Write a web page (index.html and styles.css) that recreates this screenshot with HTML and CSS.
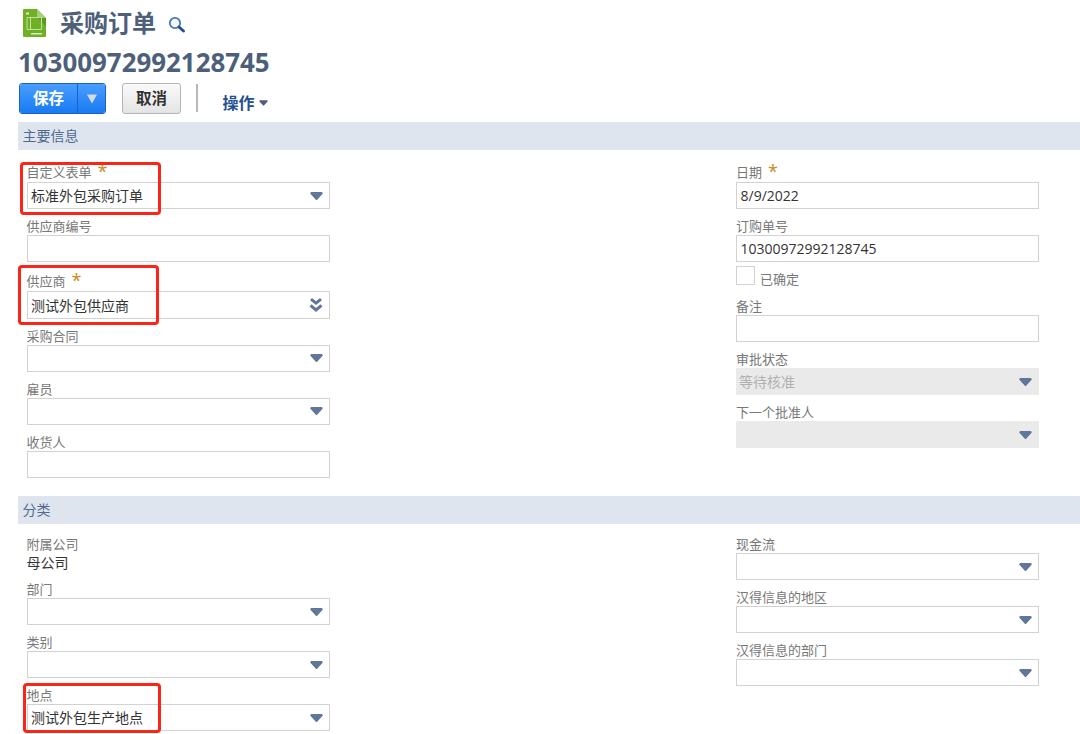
FILE: index.html
```html
<!DOCTYPE html>
<html lang="zh-CN">
<head>
    <meta charset="UTF-8">
    <meta name="viewport" content="width=device-width, initial-scale=1.0">
    <title>采购订单</title>
    <link rel="stylesheet" href="styles.css">
</head>
<body>
    <!-- shared icons -->
    <svg class="defs" width="0" height="0">
        <symbol id="arrow" viewBox="0 0 13 8"><path d="M1.5 0h10a1.2 1.2 0 0 1 .9 2L7.4 7.4a1.2 1.2 0 0 1-1.8 0L.6 2a1.2 1.2 0 0 1 .9-2z"/></symbol>
        <symbol id="double-arrow" viewBox="0 0 14 14"><path d="M2 1.2l5 4 5-4M1.500 7.400l5.500 4.600 5.500-4.600" fill="none" stroke="#607799" stroke-width="3"/></symbol>
    </svg>

    <div class="page-header">
        <div class="title-row">
            <svg class="record-icon" viewBox="0 0 23 28">
                <path d="M1 0h13l9 9v18a1 1 0 0 1-1 1H1a1 1 0 0 1-1-1V1a1 1 0 0 1 1-1z" fill="#6fb122"/>
                <path d="M15 9h8v8z" fill="#5a9a1b"/>
                <path d="M14 0l9 9h-8a1 1 0 0 1-1-1z" fill="#a5cf78"/>
                <path d="M4 8.500h14.500v12H4zM7.500 8v13" fill="none" stroke="#c4dfa4" stroke-width="1"/>
                <path d="M3 3.500h3v2H3zM8 24h11v1.500H8z" fill="#d8ebc2"/>
            </svg>
            <h1>采购订单</h1>
            <svg class="search-icon" viewBox="0 0 18 18">
                <circle cx="7" cy="7" r="5.200" fill="#f2f8ff" stroke="#4a78b8" stroke-width="1.800"/>
                <path d="M11 11l4.500 4" stroke="#24508f" stroke-width="3" stroke-linecap="round"/>
            </svg>
        </div>
        <div class="record-number">10300972992128745</div>
        <div class="actions">
            <div class="save-group">
                <button class="save">保存</button>
                <button class="save-more"><svg width="10" height="10" viewBox="0 0 11 10"><path d="M0 0h11L5.500 10z" fill="#d5dbe3"/></svg></button>
            </div>
            <button class="cancel">取消</button>
            <span class="divider"></span>
            <a class="menu">操作<svg class="menu-arrow"><use href="#arrow"/></svg></a>
        </div>
    </div>

    <h2 class="section-title">主要信息</h2>
    <div class="section main-info">
        <div class="column">
            <div class="field marked form-field">
                <label class="required">自定义表单<span class="star">*</span></label>
                <div class="box">标准外包采购订单<svg class="arrow"><use href="#arrow"/></svg></div>
            </div>
            <div class="field">
                <label>供应商编号</label>
                <div class="box"></div>
            </div>
            <div class="field marked vendor-field">
                <label class="required">供应商<span class="star">*</span></label>
                <div class="box">测试外包供应商<svg class="double-arrow"><use href="#double-arrow"/></svg></div>
            </div>
            <div class="field">
                <label>采购合同</label>
                <div class="box"><svg class="arrow"><use href="#arrow"/></svg></div>
            </div>
            <div class="field">
                <label>雇员</label>
                <div class="box"><svg class="arrow"><use href="#arrow"/></svg></div>
            </div>
            <div class="field">
                <label>收货人</label>
                <div class="box"></div>
            </div>
        </div>
        <div class="column">
            <div class="field">
                <label class="required">日期<span class="star">*</span></label>
                <div class="box">8/9/2022</div>
            </div>
            <div class="field">
                <label>订购单号</label>
                <div class="box">10300972992128745</div>
            </div>
            <div class="check-field">
                <span class="checkbox"></span>
                <span class="check-label">已确定</span>
            </div>
            <div class="field">
                <label>备注</label>
                <div class="box"></div>
            </div>
            <div class="field">
                <label>审批状态</label>
                <div class="box disabled">等待核准<svg class="arrow"><use href="#arrow"/></svg></div>
            </div>
            <div class="field">
                <label>下一个批准人</label>
                <div class="box disabled"><svg class="arrow"><use href="#arrow"/></svg></div>
            </div>
        </div>
    </div>

    <h2 class="section-title">分类</h2>
    <div class="section classification">
        <div class="column">
            <div class="field static-field">
                <label>附属公司</label>
                <div class="static">母公司</div>
            </div>
            <div class="field">
                <label>部门</label>
                <div class="box"><svg class="arrow"><use href="#arrow"/></svg></div>
            </div>
            <div class="field">
                <label>类别</label>
                <div class="box"><svg class="arrow"><use href="#arrow"/></svg></div>
            </div>
            <div class="field marked location-field">
                <label>地点</label>
                <div class="box">测试外包生产地点<svg class="arrow"><use href="#arrow"/></svg></div>
            </div>
        </div>
        <div class="column">
            <div class="field">
                <label>现金流</label>
                <div class="box"><svg class="arrow"><use href="#arrow"/></svg></div>
            </div>
            <div class="field">
                <label>汉得信息的地区</label>
                <div class="box"><svg class="arrow"><use href="#arrow"/></svg></div>
            </div>
            <div class="field">
                <label>汉得信息的部门</label>
                <div class="box"><svg class="arrow"><use href="#arrow"/></svg></div>
            </div>
        </div>
    </div>
</body>
</html>
```
FILE: styles.css
```css
*,
*::after {
    box-sizing: border-box;
}
body {
    margin: 0;
    height: 734px;
    overflow: hidden;
    background-color: #fff;
    color: #333;
    font-family: 'Open Sans', 'Noto Sans CJK SC', sans-serif;
    font-size: 14px;
}
.defs {
    display: block;
}
.page-header {
    height: 122px;
    padding: 8px 0 0 19px;
}
.title-row {
    display: flex;
    align-items: center;
    height: 30px;
    padding-left: 4px;
}
.record-icon {
    width: 23px;
    height: 28px;
}
h1 {
    margin: 0 0 0 14px;
    font-size: 24px;
    line-height: 30px;
    color: #4d5f79;
}
.search-icon {
    width: 18px;
    height: 18px;
    margin: 3px 0 0 12px;
}
.record-number {
    height: 45px;
    margin-left: -1px;
    font-size: 25.9px;
    font-weight: bold;
    line-height: 49px;
    color: #4d5f79;
}
.actions {
    display: flex;
    height: 30px;
}
button {
    padding: 0;
    font-family: inherit;
    font-weight: bold;
    line-height: 27px;
}
.save-group {
    display: flex;
    width: 87px;
    height: 31px;
    border: 1px solid #1c62c4;
    border-radius: 3px;
    overflow: hidden;
}
.save,
.save-more {
    border: 0;
    background: linear-gradient(#4a9dff, #187bf2);
    color: #fff;
    font-size: 15.5px;
}
.save {
    width: 57px;
}
.save-more {
    flex: 1;
    border-left: 1px solid #1c62c4;
}
.cancel {
    width: 59px;
    height: 31px;
    margin-left: 16px;
    border: 1px solid #b5b5b5;
    border-radius: 3px;
    background: linear-gradient(#fafafa, #e4e4e4);
    color: #333;
    font-size: 15.5px;
}
.divider {
    width: 2px;
    height: 28px;
    margin: 1px 0 0 15px;
    background-color: #b8b8b8;
}
.menu {
    display: flex;
    align-items: center;
    margin-left: 24.5px;
    padding-top: 7px;
    font-size: 16px;
    font-weight: bold;
    color: #24508f;
}
.menu-arrow {
    width: 9px;
    height: 6px;
    margin: 2px 0 0 4px;
    fill: #4d5f79;
}
.section-title {
    height: 28px;
    margin: 0 0 0 18px;
    padding-left: 4.5px;
    background-color: #dfe5ef;
    font-size: 14px;
    font-weight: normal;
    line-height: 27px;
    color: #506a90;
}
.section {
    display: grid;
    grid-template-columns: 303px 303px;
    column-gap: 406.5px;
    padding-left: 26.5px;
}
.main-info {
    height: 346px;
    padding-top: 11.7px;
}
.classification {
    padding-top: 12px;
}
.field {
    position: relative;
    margin-bottom: 8.8px;
}
label {
    display: block;
    height: 17px;
    font-size: 13px;
    line-height: 17px;
    color: #777;
}
.required {
    display: flex;
    height: 20.3px;
    line-height: 20px;
}
.star {
    margin-left: 6px;
    font-size: 18px;
    line-height: 18px;
    color: #c98a24;
}
.box {
    display: flex;
    align-items: center;
    justify-content: space-between;
    height: 27.3px;
    padding: 0 6px 0 3.5px;
    border: 1px solid #d2d2d2;
    line-height: 25px;
}
.disabled {
    padding-left: 2px;
    border-color: #eaeaea;
    background-color: #eaeaea;
    color: #b0b0b0;
}
.arrow {
    width: 13px;
    height: 8px;
    margin-left: auto;
    fill: #607799;
}
.double-arrow {
    width: 14px;
    height: 14px;
}
.check-field {
    display: flex;
    height: 27px;
    margin-top: -5px;
}
.checkbox {
    width: 19px;
    height: 19px;
    border: 1px solid #d2d2d2;
}
.check-label {
    margin-left: 5px;
    padding-top: 4px;
    font-size: 13px;
    line-height: 19px;
    color: #777;
}
.check-field + .field {
    margin-top: 4.6px;
}
.static-field {
    margin-bottom: 8px;
}
.static-field label {
    height: 18px;
}
.static {
    height: 19px;
    line-height: 17px;
}
/* red callout frames */
.marked::after {
    content: '';
    position: absolute;
    border: 3px solid #fb2416;
    border-radius: 4px;
}
.form-field::after {
    left: -7px;
    top: 0;
    width: 141px;
    height: 53px;
}
.vendor-field::after {
    left: -9px;
    top: -6px;
    width: 141px;
    height: 60px;
}
.location-field::after {
    left: -4px;
    top: -4px;
    width: 138px;
    height: 50px;
}
```
